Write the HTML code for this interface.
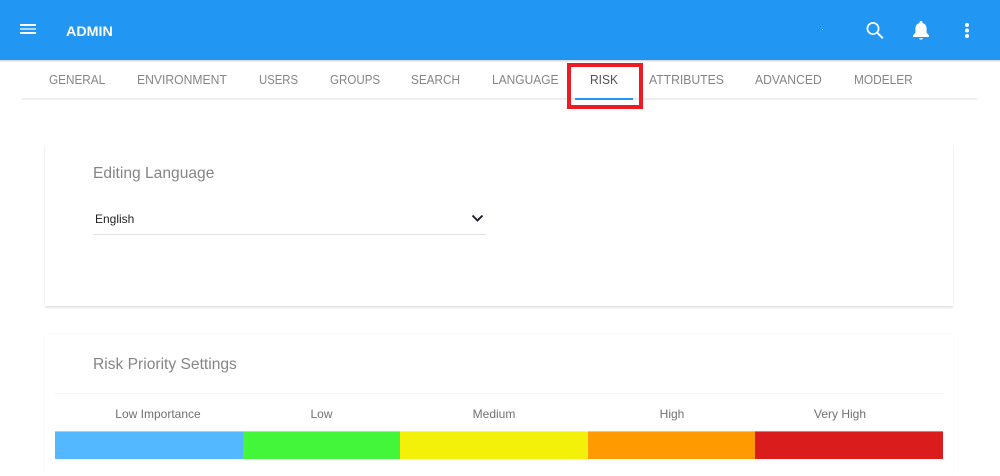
<!DOCTYPE html>
<html lang="en">
<head>
<meta charset="utf-8">
<title>Admin</title>
<style>
html,body{margin:0;padding:0;width:1000px;height:476px;overflow:hidden;background:#fff;font-family:"Liberation Sans",Arial,sans-serif}
.a{position:absolute}
.t{position:absolute;white-space:nowrap;line-height:16px}
.tab{top:72px;font-size:12.5px;color:#858585;transform-origin:0 50%}
.lab{top:406px;font-size:12px;color:#717171;transform:translateX(-50%)}
.h{font-size:15.6px;color:#858585}
.bar{position:absolute;top:431px;height:28px;box-shadow:inset 0 1px 0 rgba(255,255,255,.4)}
</style>
</head>
<body>
<div class="a" style="left:0;top:0;width:1000px;height:60px;background:#2196f3"></div>
<div class="a" style="left:0;top:60px;width:1000px;height:2px;background:linear-gradient(#d4d4d4,#f4f4f4)"></div>

<div class="a" style="left:20px;top:24px;width:16px;height:2px;background:#fff"></div>
<div class="a" style="left:20px;top:28px;width:16px;height:2px;background:#a9d6fa"></div>
<div class="a" style="left:20px;top:32px;width:16px;height:2px;background:#fff"></div>
<div class="t" style="left:66px;top:23px;font-size:14px;font-weight:bold;color:#fff;transform-origin:0 50%;transform:scaleX(1.02)">ADMIN</div>
<div class="a" style="left:822px;top:29px;width:1px;height:1px;background:#fff"></div>

<svg class="a" style="left:864px;top:19px" width="22" height="22" viewBox="0 0 22 22"><circle cx="9" cy="9.500" r="5.600" fill="none" stroke="#fff" stroke-width="1.700"/><path d="M13.200 13.700l5.600 5.600" stroke="#fff" stroke-width="1.900" fill="none"/></svg>
<svg class="a" style="left:910px;top:19px" width="22" height="22" viewBox="0 0 22 22"><path d="M11 2c-.9 0-1.500.6-1.500 1.500V4C6.700 4.800 5.400 7 5.400 9.600v4.200L3 16.200V18h16v-1.800l-2.400-2.400V9.600c0-2.600-1.300-4.800-4.100-5.600v-.5C12.500 2.600 11.900 2 11 2z" fill="#fff"/><path d="M9 19.200h4c0 .8-.9 1.300-2 1.300s-2-.5-2-1.300z" fill="#fff"/></svg>
<svg class="a" style="left:956px;top:19px" width="22" height="22" viewBox="0 0 22 22"><circle cx="11" cy="6" r="2" fill="#fff"/><circle cx="11" cy="11.500" r="2" fill="#fff"/><circle cx="11" cy="17" r="2" fill="#fff"/></svg>

<div class="a" style="left:22px;top:98px;width:955px;height:2px;background:#eeeeee"></div>
<div class="t tab" style="left:49px;transform:scaleX(.94)">GENERAL</div>
<div class="t tab" style="left:137px;transform:scaleX(.973)">ENVIRONMENT</div>
<div class="t tab" style="left:259px;transform:scaleX(.907)">USERS</div>
<div class="t tab" style="left:330px;transform:scaleX(.925)">GROUPS</div>
<div class="t tab" style="left:411px;transform:scaleX(.94)">SEARCH</div>
<div class="t tab" style="left:492px;transform:scaleX(.957)">LANGUAGE</div>
<div class="t tab" style="left:590px;color:#505050;transform:scaleX(.96)">RISK</div>
<div class="t tab" style="left:649px;transform:scaleX(.974)">ATTRIBUTES</div>
<div class="t tab" style="left:755px;transform:scaleX(.975)">ADVANCED</div>
<div class="t tab" style="left:854px;transform:scaleX(.95)">MODELER</div>

<div class="a" style="left:575px;top:98px;width:58px;height:2px;background:#2196f3"></div>
<div class="a" style="left:567px;top:63px;width:68px;height:38px;border:4px solid #ed1c24;box-sizing:content-box"></div>

<div class="a" style="left:45px;top:143px;width:908px;height:163px;background:#fff;box-shadow:0 2px 2px rgba(0,0,0,.1),0 0 2px rgba(0,0,0,.04)"></div>
<div class="t h" style="left:93px;top:166px">Editing Language</div>
<div class="t" style="left:95px;top:211px;font-size:12px;color:#222">English</div>
<svg class="a" style="left:470px;top:212px" width="15" height="13" viewBox="0 0 15 13"><path d="M2.500 3.500l5 5 5-5" fill="none" stroke="#1a1a2a" stroke-width="1.900"/></svg>
<div class="a" style="left:93px;top:234px;width:393px;height:1px;background:#e2e2e2"></div>

<div class="a" style="left:45px;top:335px;width:908px;height:141px;background:#fff;box-shadow:0 0 2px rgba(0,0,0,.05)"></div>
<div class="t h" style="left:93px;top:357px">Risk Priority Settings</div>
<div class="a" style="left:55px;top:393px;width:889px;height:1px;background:#f3f3f3"></div>

<div class="t lab" style="left:158px">Low Importance</div>
<div class="t lab" style="left:321.500px">Low</div>
<div class="t lab" style="left:494px">Medium</div>
<div class="t lab" style="left:672px">High</div>
<div class="t lab" style="left:840px">Very High</div>

<div class="bar" style="left:55px;width:188px;background:#53b8ff"></div>
<div class="bar" style="left:243px;width:157px;background:#43f63a"></div>
<div class="bar" style="left:400px;width:188px;background:#f3f009"></div>
<div class="bar" style="left:588px;width:167px;background:#ff9a00"></div>
<div class="bar" style="left:755px;width:188px;background:#da1c1c"></div>
</body>
</html>
